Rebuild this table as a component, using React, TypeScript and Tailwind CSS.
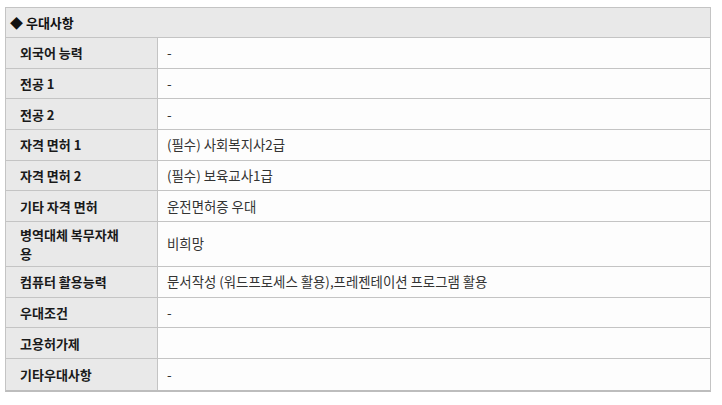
import React from "react";

const rows: [string, string][] = [
  ["외국어 능력", "-"],
  ["전공 1", "-"],
  ["전공 2", "-"],
  ["자격 면허 1", "(필수) 사회복지사2급"],
  ["자격 면허 2", "(필수) 보육교사1급"],
  ["기타 자격 면허", "운전면허증 우대"],
  ["병역대체 복무자채용", "비희망"],
  ["컴퓨터 활용능력", "문서작성 (워드프로세스 활용),프레젠테이션 프로그램 활용"],
  ["우대조건", "-"],
  ["고용허가제", ""],
  ["기타우대사항", "-"],
];

export default function App() {
  return (
    <div
      className="w-[722px] h-[405px] bg-white pt-[7px] pl-[5px]"
      style={{ fontFamily: '"Noto Sans CJK KR", "Noto Sans", sans-serif' }}
    >
      <div className="w-[706px] border border-[#c4c4c4] border-b-2 border-b-[#bdbdbd]">
        <div className="h-[30px] bg-[#e9e9e9] border-b border-[#c4c4c4] flex items-center pl-[4px] text-[13px] font-bold text-[#111]">
          ◆ 우대사항
        </div>
        {rows.map(([k, v], i) => (
          <div
            key={i}
            className={`flex ${i < rows.length - 1 ? "min-h-[30.67px] border-b border-[#c4c4c4]" : "min-h-[31.5px]"}`}
          >
            <div className="w-[152px] shrink-0 bg-[#e9e9e9] border-r border-[#c4c4c4] py-[3px] pl-[14px] pr-[32px] text-[13px] leading-[19px] font-bold text-[#1a1a1a] flex items-center">
              <span className="min-w-0 break-all">{k}</span>
            </div>
            <div className="flex-1 bg-[#fdfdfd] py-[3px] pl-[9px] text-[13.4px] leading-[19px] text-[#333] flex items-center">
              {v}
            </div>
          </div>
        ))}
      </div>
    </div>
  );
}
